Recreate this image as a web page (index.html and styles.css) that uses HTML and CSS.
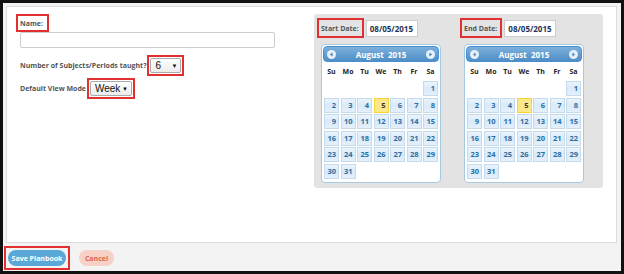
FILE: index.html
```html
<!DOCTYPE html>
<html>
<head>
<meta charset="utf-8">
<link rel="stylesheet" href="styles.css">
</head>
<body>
<div class="frame">
  <div class="panel">
    <div class="form-col">
      <div class="hl hl-label"><span class="lbl">Name:</span></div>
      <div class="text-input"></div>
      <div class="row row-subjects">
        <span class="lbl">Number of Subjects/Periods taught?</span>
        <div class="hl hl-select"><div class="select sel-num"><span>6</span><span class="arrow">&#9660;</span></div></div>
      </div>
      <div class="row row-view">
        <span class="lbl">Default View Mode</span>
        <div class="hl hl-select"><div class="select sel-week"><span>Week</span><span class="arrow">&#9660;</span></div></div>
      </div>
    </div>
    <div class="dates">
      <div class="date-col">
        <div class="date-head">
          <div class="hl hl-date"><span class="lbl">Start Date:</span></div>
          <div class="date-input">08/05/2015</div>
        </div>
        <div class="cal">
          <div class="cal-head">
            <svg class="nav" width="9" height="9" viewBox="0 0 9 9"><circle cx="4.5" cy="4.5" r="4.5" fill="#e6f0f9"/><polygon points="5.6,2.4 5.6,6.6 2.8,4.5" fill="#4a88bf"/></svg>
            <span class="title">August&nbsp; 2015</span>
            <svg class="nav" width="9" height="9" viewBox="0 0 9 9"><circle cx="4.5" cy="4.5" r="4.5" fill="#e6f0f9"/><polygon points="3.4,2.4 3.4,6.6 6.2,4.5" fill="#4a88bf"/></svg>
          </div>
          <div class="dow"><span>Su</span><span>Mo</span><span>Tu</span><span>We</span><span>Th</span><span>Fr</span><span>Sa</span></div>
          <div class="grid">
            <i></i><i></i><i></i><i></i><i></i><i></i><b>1</b>
            <b>2</b><b>3</b><b>4</b><b class="today">5</b><b>6</b><b>7</b><b>8</b>
            <b>9</b><b>10</b><b>11</b><b>12</b><b>13</b><b>14</b><b>15</b>
            <b>16</b><b>17</b><b>18</b><b>19</b><b>20</b><b>21</b><b>22</b>
            <b>23</b><b>24</b><b>25</b><b>26</b><b>27</b><b>28</b><b>29</b>
            <b>30</b><b>31</b>
          </div>
        </div>
      </div>
      <div class="date-col">
        <div class="date-head">
          <div class="hl hl-date"><span class="lbl">End Date:</span></div>
          <div class="date-input">08/05/2015</div>
        </div>
        <div class="cal">
          <div class="cal-head">
            <svg class="nav" width="9" height="9" viewBox="0 0 9 9"><circle cx="4.5" cy="4.5" r="4.5" fill="#e6f0f9"/><polygon points="5.6,2.4 5.6,6.6 2.8,4.5" fill="#4a88bf"/></svg>
            <span class="title">August&nbsp; 2015</span>
            <svg class="nav" width="9" height="9" viewBox="0 0 9 9"><circle cx="4.5" cy="4.5" r="4.5" fill="#e6f0f9"/><polygon points="3.4,2.4 3.4,6.6 6.2,4.5" fill="#4a88bf"/></svg>
          </div>
          <div class="dow"><span>Su</span><span>Mo</span><span>Tu</span><span>We</span><span>Th</span><span>Fr</span><span>Sa</span></div>
          <div class="grid">
            <i></i><i></i><i></i><i></i><i></i><i></i><b>1</b>
            <b>2</b><b>3</b><b>4</b><b class="today">5</b><b>6</b><b>7</b><b>8</b>
            <b>9</b><b>10</b><b>11</b><b>12</b><b>13</b><b>14</b><b>15</b>
            <b>16</b><b>17</b><b>18</b><b>19</b><b>20</b><b>21</b><b>22</b>
            <b>23</b><b>24</b><b>25</b><b>26</b><b>27</b><b>28</b><b>29</b>
            <b>30</b><b>31</b>
          </div>
        </div>
      </div>
    </div>
  </div>
  <div class="footer">
    <div class="hl hl-btn"><div class="btn btn-save">Save Planbook</div></div>
    <div class="btn btn-cancel">Cancel</div>
  </div>
</div>
</body>
</html>
```

FILE: styles.css
```css
html, body { margin: 0; padding: 0; }
body { font-family: "Open Sans", "Liberation Sans", sans-serif; }

.frame {
  width: 624px; height: 274px; box-sizing: border-box;
  border: 3px solid #111; background: #f3f3f3;
  display: flex; flex-direction: column;
}
.panel {
  margin: 3px 4px 0 3px; height: 237px; box-sizing: border-box;
  background: #fff; border: 1px solid #dcdcdc;
  display: flex; align-items: flex-start;
}
.lbl { font-size: 7px; font-weight: 700; color: #555; white-space: nowrap; }

.hl { border: 2px solid #e0302f; box-sizing: border-box; display: flex; align-items: center; }

.form-col { width: 298px; padding: 7px 0 0 9px; display: flex; flex-direction: column; }
.hl-label { width: 33px; height: 18px; padding-left: 2px; }
.text-input {
  width: 255px; height: 16px; box-sizing: border-box; margin-left: 4px;
  border: 1px solid #ccc; border-radius: 2px; background: #fff;
}
.row { display: flex; align-items: center; padding-left: 4px; }
.row-subjects { margin-top: 7px; }
.row-view { margin-top: 2px; }
.row .lbl { margin-right: 1px; }
.hl-select { padding: 1px; }
.select {
  height: 15px; box-sizing: border-box; border: 1px solid #aaa; border-radius: 2px;
  background: linear-gradient(#fff, #ececec);
  display: flex; align-items: center; justify-content: space-between;
  font-family: "Liberation Sans", Arial, sans-serif; font-size: 10px; color: #111;
  padding: 0 3px 0 4px;
}
.sel-num { width: 31px; }
.sel-week { width: 42px; height: 15px; }
.arrow { font-size: 6px; }

.dates {
  margin-top: 7px; width: 289px; height: 174px; box-sizing: border-box;
  background: #e3e3e3; border-radius: 3px; padding: 4px 0 0 3px;
  display: flex; gap: 0;
}
.date-col { width: 143px; display: flex; flex-direction: column; }
.date-head { display: flex; align-items: center; }
.hl-date { height: 20px; padding: 0 3px 0 2px; }
.date-input {
  margin-left: 2px; height: 17px; width: 52px; box-sizing: border-box;
  background: #fff; border: 1px solid #ccc; padding: 0 3px;
  display: flex; align-items: center;
  font-size: 8px; font-weight: 700; color: #1d3557;
}
.cal {
  margin: 6px 0 0 4px; width: 120px; box-sizing: border-box;
  background: #fff; border: 1px solid #a6c9e2; border-radius: 4px;
  padding: 1px 1px 3px 1px;
}
.cal-head {
  height: 16px; box-sizing: border-box; border: 1px solid #4a8fcf; border-radius: 4px;
  background: linear-gradient(#7bb0dc, #4f8ec5);
  display: flex; align-items: center; justify-content: space-between; padding: 0 3px;
}
.title { color: #fff; font-size: 8px; font-weight: 700; }
.dow {
  display: grid; grid-template-columns: repeat(7, 1fr); column-gap: 1.5px;
  padding: 0 1px; height: 19px; align-items: center;
}
.dow span { text-align: center; font-size: 7px; font-weight: 700; color: #222; }
.grid {
  display: grid; grid-template-columns: repeat(7, 15px); grid-auto-rows: 15px;
  column-gap: 1.5px; row-gap: 1.6px; padding: 0 1px;
}
.grid b {
  box-sizing: border-box; border: 1px solid #c5dbec;
  background: linear-gradient(#eaf4fd, #d9eafa 50%, #e4f0fb);
  color: #2e6e9e; font-size: 7.5px; font-weight: 700;
  text-align: right; padding-right: 2px; line-height: 13px;
}
.grid b.today { background: #fbe88a; border-color: #f5d33a; color: #363636; }

.footer { display: flex; align-items: center; padding: 3px 0 0 1px; }
.hl-btn { padding: 2px; }
.btn {
  height: 16px; border-radius: 8px; display: flex; align-items: center; justify-content: center;
  font-size: 7px; font-weight: 700;
}
.btn-save { width: 58px; background: #5aa8d8; color: #fff; }
.btn-cancel { margin-left: 9px; width: 35px; background: #f7d1c5; color: #d9654e; }
```
